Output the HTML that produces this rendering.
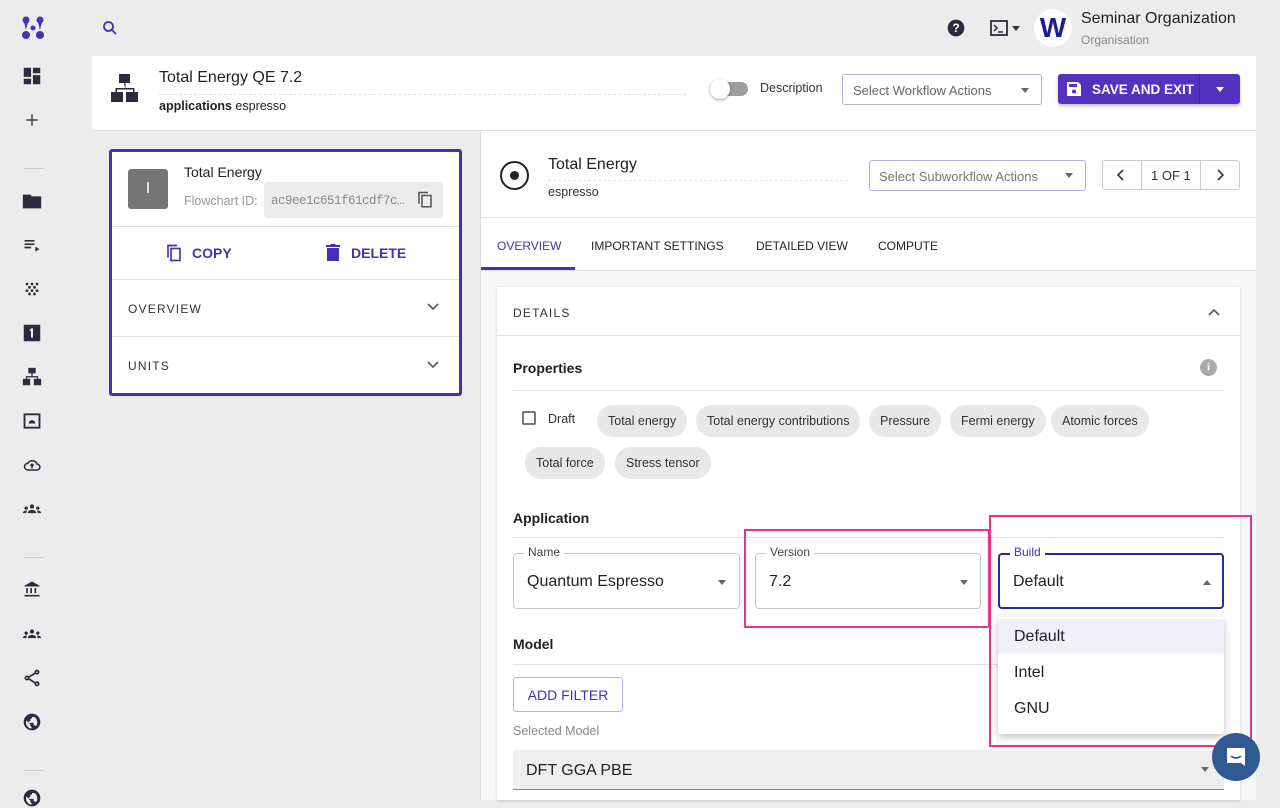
<!DOCTYPE html>
<html><head><meta charset="utf-8"><style>
*{box-sizing:border-box;margin:0;padding:0}
body{width:1280px;height:800px;overflow:hidden;background:#ececec;font-family:"Liberation Sans",sans-serif;color:#222;position:relative}
.a{position:absolute}
.ic{position:absolute;left:22px;width:20px;height:20px}
.chip{position:absolute;height:32px;border-radius:16px;background:#e8e8e8;font-size:12.5px;line-height:32px;padding:0 11px;color:#333}
.fld{position:absolute;border:1px solid #c8c8c8;border-radius:4px;background:#fff;height:56px}
.fld .lb{position:absolute;top:-9px;left:10px;background:#fff;padding:0 4px;font-size:12px;color:#444}
.fld .v{position:absolute;left:13px;top:19px;font-size:16px;color:#222}
.tri{position:absolute;width:0;height:0;border-left:4px solid transparent;border-right:4px solid transparent;border-top:5px solid #666}
.hr{position:absolute;height:1px;background:#e0e0e0}
</style></head><body>
<!-- sidebar -->
<svg class="a" style="left:22px;top:16px" width="22" height="24" viewBox="0 0 22 24" fill="#4a2fb0"><circle cx="4" cy="4" r="3.5"/><circle cx="18" cy="4" r="3.5"/><circle cx="11" cy="12" r="2.5"/><circle cx="4" cy="19" r="4"/><circle cx="18" cy="19" r="4"/><path d="M2 6l2 8 2-8zM16 6l2 8 2-8z"/></svg>
<svg class="a" style="left:101px;top:19px" width="18" height="18" viewBox="0 0 24 24" fill="none" stroke="#4a2fb0" stroke-width="2.4"><circle cx="10" cy="10" r="6"/><path d="M14.5 14.5L20 20"/></svg>
<svg class="ic" style="top:65px;left:21px;width:22px;height:22px" viewBox="0 0 24 24" fill="#2b2b3d"><path d="M3 13h8V3H3zm0 8h8v-6H3zm10 0h8V11h-8zm0-18v6h8V3z"/></svg>
<svg class="ic" style="top:110px" viewBox="0 0 24 24" fill="none" stroke="#444" stroke-width="1.8"><path d="M12 5v14M5 12h14"/></svg>
<div class="a" style="left:24px;top:168px;width:20px;height:1px;background:#ccc"></div>
<svg class="ic" style="top:190px;left:21px;width:22px;height:22px" viewBox="0 0 24 24" fill="#2b2b3d"><path d="M2 5h8l2 2h10v13H2z"/></svg>
<svg class="ic" style="top:235px" viewBox="0 0 24 24" fill="#333"><path d="M3 6h12v2H3zm0 4h12v2H3zm0 4h8v2H3zm13 0l5 3-5 3z"/></svg>
<svg class="ic" style="top:279px" viewBox="0 0 24 24" fill="#333"><circle cx="6" cy="6" r="1.7"/><circle cx="12" cy="6" r="1.7"/><circle cx="18" cy="6" r="1.7"/><circle cx="9" cy="10" r="1.7"/><circle cx="15" cy="10" r="1.7"/><circle cx="6" cy="14" r="1.7"/><circle cx="12" cy="14" r="1.7"/><circle cx="18" cy="14" r="1.7"/><circle cx="9" cy="18" r="1.7"/><circle cx="15" cy="18" r="1.7"/></svg>
<svg class="ic" style="top:322px;left:21px;width:22px;height:22px" viewBox="0 0 24 24"><rect x="3" y="3" width="18" height="18" fill="#2b2b3d"/><path d="M11 7h2v10h-2zM9.5 8h2v1.5h-2z" fill="#fff"/></svg>
<svg class="ic" style="top:366px;left:21px;width:22px;height:22px" viewBox="0 0 24 24" fill="#2b2b3d"><rect x="8" y="2" width="8" height="6"/><path d="M11.3 8h1.4v3h6v3h-1.4v-1.6H6.7V14H5.3v-3h6z"/><rect x="2" y="14" width="8" height="7"/><rect x="14" y="14" width="8" height="7"/></svg>
<svg class="ic" style="top:411px" viewBox="0 0 24 24"><rect x="3" y="4" width="18" height="16" fill="none" stroke="#2b2b3d" stroke-width="2.2"/><path d="M8 15a4 4 0 0 1 8 0z" fill="#2b2b3d"/></svg>
<svg class="ic" style="top:455px" viewBox="0 0 24 24" fill="none" stroke="#2b2b3d" stroke-width="1.8"><path d="M7 18a4 4 0 0 1 0-8 6 6 0 0 1 11 1 3.5 3.5 0 0 1 0 7z"/><path d="M12 16v-5M10 13l2-2 2 2"/></svg>
<svg class="ic" style="top:499px" viewBox="0 0 24 24" fill="#2b2b3d"><circle cx="12" cy="9" r="2.5"/><circle cx="5" cy="11" r="2"/><circle cx="19" cy="11" r="2"/><path d="M7 17a5 4 0 0 1 10 0zM1 17a4 3 0 0 1 5-3l-1 3zM23 17a4 3 0 0 0-5-3l1 3z"/></svg>
<div class="a" style="left:24px;top:557px;width:20px;height:1px;background:#ccc"></div>
<svg class="ic" style="top:579px" viewBox="0 0 24 24" fill="#2b2b3d"><path d="M12 3l9 5v1H3V8zM5 11h2v6H5zm5 0h2v6h-2zm5 0h2v6h-2zM3 19h18v2H3z"/></svg>
<svg class="ic" style="top:624px" viewBox="0 0 24 24" fill="#2b2b3d"><circle cx="12" cy="9" r="2.5"/><circle cx="5" cy="11" r="2"/><circle cx="19" cy="11" r="2"/><path d="M7 17a5 4 0 0 1 10 0zM1 17a4 3 0 0 1 5-3l-1 3zM23 17a4 3 0 0 0-5-3l1 3z"/></svg>
<svg class="ic" style="top:668px" viewBox="0 0 24 24" fill="none" stroke="#2b2b3d" stroke-width="2"><circle cx="18" cy="5" r="2"/><circle cx="6" cy="12" r="2"/><circle cx="18" cy="19" r="2"/><path d="M8 11l8-5M8 13l8 5"/></svg>
<svg class="ic" style="top:712px" viewBox="0 0 24 24" fill="#2b2b3d"><path d="M12 2a10 10 0 1 0 0 20 10 10 0 0 0 0-20zm-1 18a8 8 0 0 1-6-10l5 5v1a2 2 0 0 0 2 2zm6-3a2 2 0 0 0-2-1h-1v-3H8v-2h2V8h2V6h3a8 8 0 0 1 2 11z"/></svg>
<div class="a" style="left:24px;top:770px;width:20px;height:1px;background:#ccc"></div>
<svg class="ic" style="top:788px" viewBox="0 0 24 24" fill="#2b2b3d"><path d="M12 2a10 10 0 1 0 0 20 10 10 0 0 0 0-20zm-1 18a8 8 0 0 1-6-10l5 5v1a2 2 0 0 0 2 2zm6-3a2 2 0 0 0-2-1h-1v-3H8v-2h2V8h2V6h3a8 8 0 0 1 2 11z"/></svg>

<!-- top bar right -->
<svg class="a" style="left:946px;top:18px" width="20" height="20" viewBox="0 0 24 24"><circle cx="12" cy="12" r="10" fill="#2b2b3d"/><text x="12" y="17" font-size="14" font-weight="bold" text-anchor="middle" fill="#fff" font-family="Liberation Sans">?</text></svg>
<svg class="a" style="left:990px;top:20px" width="18" height="16" viewBox="0 0 18 16"><rect x="1" y="1" width="16" height="14" fill="none" stroke="#2b2b3d" stroke-width="1.8"/><path d="M4 5l3 3-3 3M8 12h5" stroke="#2b2b3d" stroke-width="1.5" fill="none"/></svg>
<div class="tri" style="left:1012px;top:26px;border-top-color:#333"></div>
<div class="a" style="left:1034px;top:9px;width:38px;height:38px;border-radius:50%;background:#fff;text-align:center;font:bold 28px/38px 'Liberation Sans';color:#1f1f8a">W</div>
<div class="a" style="left:1081px;top:10px;font-size:16px;color:#222">Seminar Organization</div>
<div class="a" style="left:1081px;top:33px;font-size:12px;color:#888">Organisation</div>

<!-- header -->
<div class="a" style="left:92px;top:56px;width:1164px;height:75px;background:#fff;border-bottom:1px solid #ddd"></div>
<svg class="a" style="left:111px;top:73px" width="28" height="30" viewBox="0 0 28 30" fill="#2b2b3d"><rect x="8" y="1" width="11" height="9"/><path d="M13 10h1.5v5h9v5h-1.5v-3.5h-16V20h-1.5v-5h9.5z"/><rect x="0" y="19" width="12" height="10"/><rect x="15" y="19" width="12" height="10"/></svg>
<div class="a" style="left:159px;top:69px;font-size:16px">Total Energy QE 7.2</div>
<div class="a" style="left:159px;top:94px;width:527px;border-top:1px dashed #e2e2e2"></div>
<div class="a" style="left:159px;top:99px;font-size:12.5px"><b>applications</b> espresso</div>
<div class="a" style="left:714px;top:82px;width:34px;height:14px;border-radius:7px;background:#9e9e9e"></div>
<div class="a" style="left:710px;top:79px;width:20px;height:20px;border-radius:50%;background:#fff;box-shadow:0 1px 3px rgba(0,0,0,.4)"></div>
<div class="a" style="left:760px;top:81px;font-size:12.5px;color:#333">Description</div>
<div class="a" style="left:842px;top:74px;width:200px;height:31px;border:1px solid #b9aee0;border-radius:3px;font-size:13px;color:#666;padding:8px 10px">Select Workflow Actions</div>
<div class="tri" style="left:1021px;top:88px"></div>
<div class="a" style="left:1058px;top:74px;width:182px;height:30px;background:#5432c0;border-radius:3px;box-shadow:0 2px 3px rgba(0,0,0,.25)"></div>
<svg class="a" style="left:1067px;top:82px" width="14" height="14" viewBox="0 0 14 14"><path d="M0 0h11l3 3v11H0z" fill="#fff"/><rect x="2" y="2" width="8" height="3" fill="#5432c0"/><circle cx="7" cy="9.5" r="2" fill="#5432c0"/></svg>
<div class="a" style="left:1092px;top:82px;font-size:13.5px;font-weight:bold;color:#fff">SAVE AND EXIT</div>
<div class="a" style="left:1199px;top:74px;width:1px;height:30px;background:#4424a8"></div>
<div class="tri" style="left:1216px;top:87px;border-top-color:#fff"></div>

<!-- left panel -->
<div class="a" style="left:109px;top:149px;width:353px;height:247px;background:#fff;border:3px solid #4d2cb5;border-radius:3px"></div>
<div class="a" style="left:128px;top:169px;width:40px;height:40px;background:#757575;border-radius:3px;color:#fff;text-align:center;font-size:16px;line-height:40px">I</div>
<div class="a" style="left:184px;top:164px;font-size:14px">Total Energy</div>
<div class="a" style="left:184px;top:194px;font-size:12.5px;color:#999">Flowchart ID:</div>
<div class="a" style="left:264px;top:182px;width:179px;height:36px;background:#ececec;border-radius:4px"></div>
<div class="a" style="left:271px;top:194px;font-size:12.5px;color:#888;font-family:'Liberation Mono',monospace;letter-spacing:-.5px">ac9ee1c651f61cdf7c…</div>
<svg class="a" style="left:416px;top:191px" width="18" height="18" viewBox="0 0 24 24" fill="none" stroke="#555" stroke-width="2"><rect x="8" y="6" width="12" height="15"/><path d="M4 17V2h12"/></svg>
<div class="hr" style="left:112px;top:226px;width:347px"></div>
<svg class="a" style="left:165px;top:243px" width="18" height="20" viewBox="0 0 24 24" fill="none" stroke="#4d2cb5" stroke-width="2.2"><rect x="8" y="6" width="12" height="16"/><path d="M4 18V2h12"/></svg>
<div class="a" style="left:192px;top:245px;font-size:14px;font-weight:bold;color:#4d2cb5">COPY</div>
<svg class="a" style="left:326px;top:244px" width="14" height="17" viewBox="0 0 14 17" fill="#4d2cb5"><path d="M1 4h12v13H1zM0 1h4l1-1h4l1 1h4v2H0z"/></svg>
<div class="a" style="left:351px;top:245px;font-size:14px;font-weight:bold;color:#4d2cb5">DELETE</div>
<div class="hr" style="left:112px;top:279px;width:347px"></div>
<div class="a" style="left:128px;top:302px;font-size:12px;letter-spacing:1.2px;color:#333">OVERVIEW</div>
<svg class="a" style="left:427px;top:303px" width="12" height="8" viewBox="0 0 12 8" fill="none" stroke="#555" stroke-width="1.6"><path d="M1 1l5 5 5-5"/></svg>
<div class="hr" style="left:112px;top:336px;width:347px"></div>
<div class="a" style="left:128px;top:359px;font-size:12px;letter-spacing:1.2px;color:#333">UNITS</div>
<svg class="a" style="left:427px;top:361px" width="12" height="8" viewBox="0 0 12 8" fill="none" stroke="#555" stroke-width="1.6"><path d="M1 1l5 5 5-5"/></svg>

<!-- right panel -->
<div class="a" style="left:480px;top:131px;width:776px;height:669px;background:#f7f7f7;border-left:1px solid #ddd"></div>
<div class="a" style="left:481px;top:131px;width:775px;height:139px;background:#fff"></div>
<div class="hr" style="left:481px;top:217px;width:775px"></div>
<div class="hr" style="left:481px;top:270px;width:775px"></div>
<div class="a" style="left:500px;top:161px;width:29px;height:29px;border:2px solid #222;border-radius:50%"></div>
<div class="a" style="left:510px;top:171px;width:9px;height:9px;background:#222;border-radius:50%"></div>
<div class="a" style="left:548px;top:156px;font-size:16px">Total Energy</div>
<div class="a" style="left:548px;top:180px;width:300px;border-top:1px dashed #e2e2e2"></div>
<div class="a" style="left:548px;top:185px;font-size:12.5px;color:#333">espresso</div>
<div class="a" style="left:869px;top:160px;width:217px;height:31px;border:1px solid #b9aee0;border-radius:3px;font-size:13px;color:#777;padding:8px 9px">Select Subworkflow Actions</div>
<div class="tri" style="left:1065px;top:173px"></div>
<div class="a" style="left:1102px;top:160px;width:138px;height:30px;border:1px solid #ccc;border-radius:3px"></div>
<div class="a" style="left:1141px;top:160px;width:1px;height:30px;background:#ccc"></div>
<div class="a" style="left:1200px;top:160px;width:1px;height:30px;background:#ccc"></div>
<svg class="a" style="left:1117px;top:169px" width="8" height="12" viewBox="0 0 8 12" fill="none" stroke="#333" stroke-width="1.6"><path d="M6 1L1 6l5 5"/></svg>
<svg class="a" style="left:1216px;top:169px" width="8" height="12" viewBox="0 0 8 12" fill="none" stroke="#333" stroke-width="1.6"><path d="M2 1l5 5-5 5"/></svg>
<div class="a" style="left:1151px;top:168px;font-size:13px;color:#333">1 OF 1</div>
<div class="a" style="left:497px;top:239px;font-size:12px;color:#4d2cb5">OVERVIEW</div>
<div class="a" style="left:481px;top:267px;width:94px;height:3px;background:#4d2cb5"></div>
<div class="a" style="left:591px;top:239px;font-size:12px;color:#222">IMPORTANT SETTINGS</div>
<div class="a" style="left:756px;top:239px;font-size:12px;color:#222">DETAILED VIEW</div>
<div class="a" style="left:878px;top:239px;font-size:12px;color:#222">COMPUTE</div>

<!-- card -->
<div class="a" style="left:497px;top:287px;width:743px;height:513px;background:#fff;box-shadow:0 1px 3px rgba(0,0,0,.15)"></div>
<div class="a" style="left:513px;top:306px;font-size:12px;letter-spacing:1.2px;color:#333">DETAILS</div>
<svg class="a" style="left:1208px;top:308px" width="12" height="8" viewBox="0 0 12 8" fill="none" stroke="#555" stroke-width="1.6"><path d="M1 7l5-5 5 5"/></svg>
<div class="hr" style="left:497px;top:335px;width:743px"></div>
<div class="a" style="left:513px;top:360px;font-size:14px;font-weight:bold;color:#222">Properties</div>
<div class="a" style="left:1200px;top:359px;width:17px;height:17px;border-radius:50%;background:#aaa;color:#fff;font:bold 11px/17px 'Liberation Serif';text-align:center">i</div>
<div class="hr" style="left:513px;top:390px;width:711px"></div>
<div class="a" style="left:522px;top:411px;width:14px;height:14px;border:2px solid #777;border-radius:2px"></div>
<div class="a" style="left:548px;top:412px;font-size:12.5px;color:#333">Draft</div>
<div class="chip" style="left:597px;top:405px">Total energy</div>
<div class="chip" style="left:696px;top:405px">Total energy contributions</div>
<div class="chip" style="left:869px;top:405px">Pressure</div>
<div class="chip" style="left:950px;top:405px">Fermi energy</div>
<div class="chip" style="left:1051px;top:405px">Atomic forces</div>
<div class="chip" style="left:525px;top:447px">Total force</div>
<div class="chip" style="left:615px;top:447px">Stress tensor</div>
<div class="a" style="left:513px;top:510px;font-size:14px;font-weight:bold;color:#222">Application</div>
<div class="hr" style="left:513px;top:537px;width:711px"></div>
<div class="fld" style="left:513px;top:553px;width:227px"><span class="lb">Name</span><span class="v">Quantum Espresso</span><div class="tri" style="left:204px;top:26px"></div></div>
<div class="fld" style="left:755px;top:553px;width:226px"><span class="lb">Version</span><span class="v">7.2</span><div class="tri" style="left:204px;top:26px"></div></div>
<div class="fld" style="left:998px;top:553px;width:226px;border:2px solid #2a2a9a"><span class="lb" style="color:#4d2cb5;top:-10px">Build</span><span class="v" style="top:18px">Default</span><div class="tri" style="left:203px;top:25px;border-top:none;border-bottom:5px solid #666"></div></div>
<div class="a" style="left:513px;top:636px;font-size:14px;font-weight:bold;color:#222">Model</div>
<div class="hr" style="left:513px;top:664px;width:711px"></div>
<div class="a" style="left:513px;top:677px;width:110px;height:35px;border:1px solid #b9aee0;border-radius:3px;font-size:14px;color:#4d2cb5;text-align:center;line-height:35px">ADD FILTER</div>
<div class="a" style="left:513px;top:724px;font-size:12.5px;color:#888">Selected Model</div>
<div class="a" style="left:513px;top:750px;width:711px;height:40px;background:#eee;border-bottom:1px solid #888"></div>
<div class="a" style="left:526px;top:762px;font-size:16px;color:#222">DFT GGA PBE</div>
<div class="tri" style="left:1201px;top:767px"></div>

<!-- dropdown -->
<div class="a" style="left:998px;top:617px;width:226px;height:117px;background:#fff;box-shadow:0 3px 8px rgba(0,0,0,.25);border-radius:3px"></div>
<div class="a" style="left:998px;top:619px;width:226px;height:35px;background:#f0eff7"></div>
<div class="a" style="left:1014px;top:628px;font-size:16px">Default</div>
<div class="a" style="left:1014px;top:664px;font-size:16px">Intel</div>
<div class="a" style="left:1014px;top:700px;font-size:16px">GNU</div>

<!-- pink boxes -->
<div class="a" style="left:744px;top:529px;width:246px;height:99px;border:2px solid #e8338a"></div>
<div class="a" style="left:989px;top:515px;width:263px;height:232px;border:2px solid #e8338a"></div>

<!-- right strip -->
<div class="a" style="left:1256px;top:56px;width:24px;height:744px;background:#ececec"></div>
<div class="a" style="left:1212px;top:733px;width:48px;height:48px;border-radius:50%;background:#2f5a92"></div>
<svg class="a" style="left:1224px;top:745px" width="24" height="24" viewBox="0 0 24 24"><path d="M3 3h18v18l-4-3H3z" fill="#fff"/><path d="M7 11q5 4 10 0" stroke="#2f5a92" stroke-width="1.6" fill="none"/></svg>
</body></html>
